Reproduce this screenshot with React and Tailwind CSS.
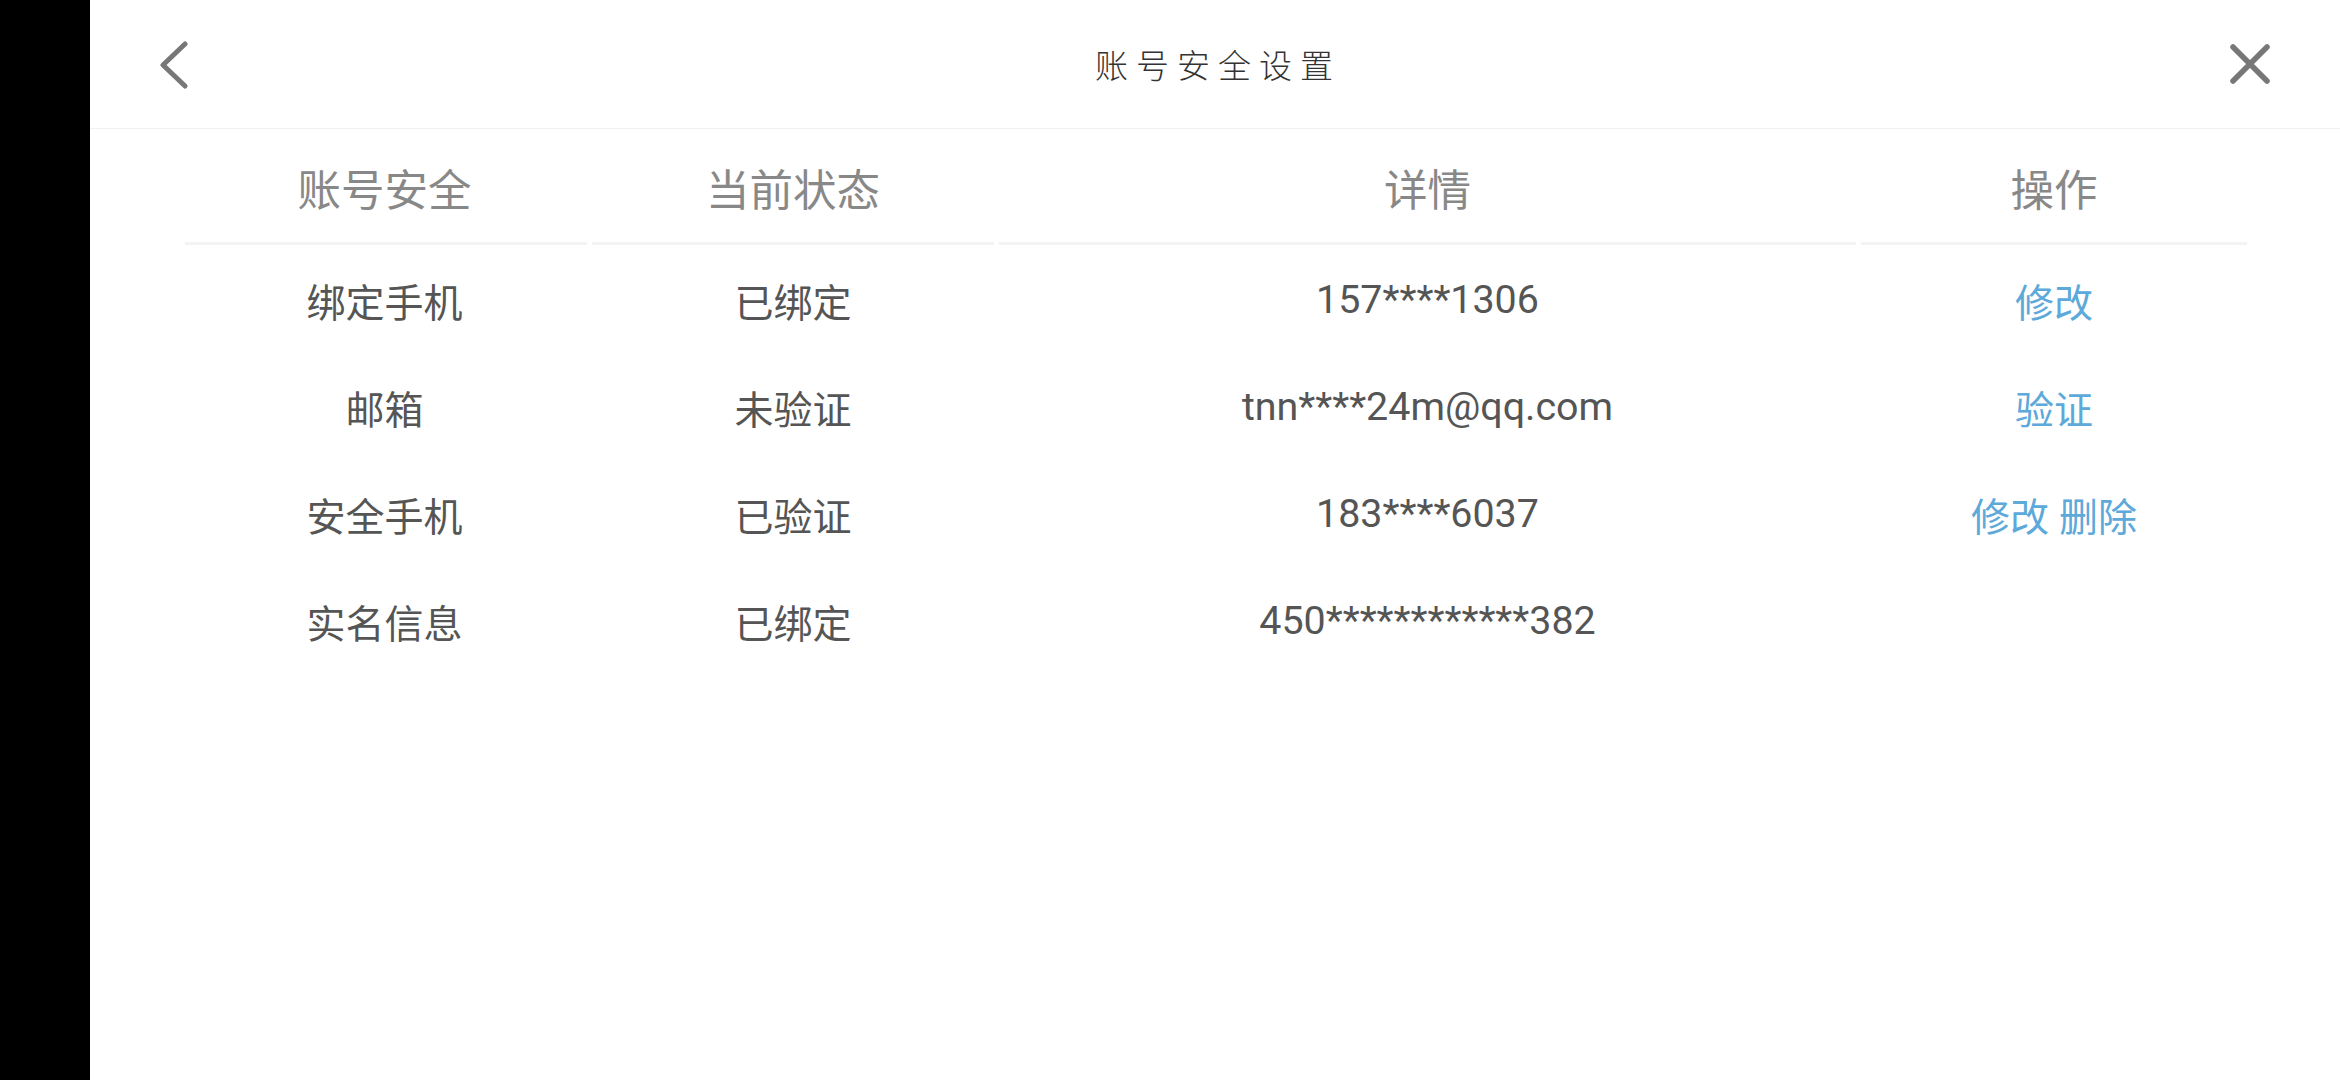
const rows = [
  { name: "绑定手机", status: "已绑定", detail: "157****1306", actions: ["修改"] },
  { name: "邮箱", status: "未验证", detail: "tnn****24m@qq.com", actions: ["验证"] },
  { name: "安全手机", status: "已验证", detail: "183****6037", actions: ["修改", "删除"] },
  { name: "实名信息", status: "已绑定", detail: "450************382", actions: [] },
];

const headers = ["账号安全", "当前状态", "详情", "操作"];

const gridCols = "grid grid-cols-[402px_402px_857px_386px] gap-x-[5px]";

export default function App() {
  return (
    <div className="flex h-[1080px] w-[2340px] overflow-hidden bg-white font-['Roboto','Noto_Sans_CJK_SC',sans-serif]">
      {/* Left inset */}
      <div className="w-[90px] shrink-0 bg-black" />

      <div className="flex flex-1 flex-col">
        {/* Title bar */}
        <div className="flex h-[129px] items-center justify-between border-b border-[#f0f0f0] pl-[70px] pr-[70px]">
          <svg width="40" height="50" viewBox="0 0 40 50" fill="none" stroke="#777" strokeWidth="5" strokeLinecap="round" strokeLinejoin="round" className="mt-[2px]">
            <path d="M25 4 L3 25 L25 46" />
          </svg>
          <h1 className="pl-[6px] text-[33px] font-extralight leading-none tracking-[8px] text-[#333] font-['Noto_Sans_CJK_SC',sans-serif]">
            账号安全设置
          </h1>
          <svg width="40" height="40" viewBox="0 0 40 40" fill="none" stroke="#777" strokeWidth="5.5" strokeLinecap="round">
            <path d="M3 3 L37 37 M37 3 L3 37" />
          </svg>
        </div>

        {/* Table */}
        <div className="pl-[95px]">
          <div className={gridCols}>
            {headers.map((h, i) => (
              <div
                key={h}
                className={`flex h-[116px] items-center justify-center border-b-[3px] border-[#f3f3f3] pt-[12px] text-[43.5px] text-[#888] ${i === 0 ? "pr-[3px]" : ""}`}
              >
                {h}
              </div>
            ))}
          </div>

          <div className="pt-[2px]">
            {rows.map((row) => (
              <div key={row.name} className={`${gridCols} h-[107px] items-center text-center text-[39px] text-[#555]`}>
                <div className="pr-[3px] pt-[8px]">{row.name}</div>
                <div className="pt-[8px]">{row.status}</div>
                <div className="pb-[2px] text-[39.4px]">{row.detail}</div>
                <div className="flex justify-center gap-[10px] pt-[8px] text-[#5ca9da]">
                  {row.actions.map((a) => (
                    <span key={a}>{a}</span>
                  ))}
                </div>
              </div>
            ))}
          </div>
        </div>
      </div>
    </div>
  );
}
